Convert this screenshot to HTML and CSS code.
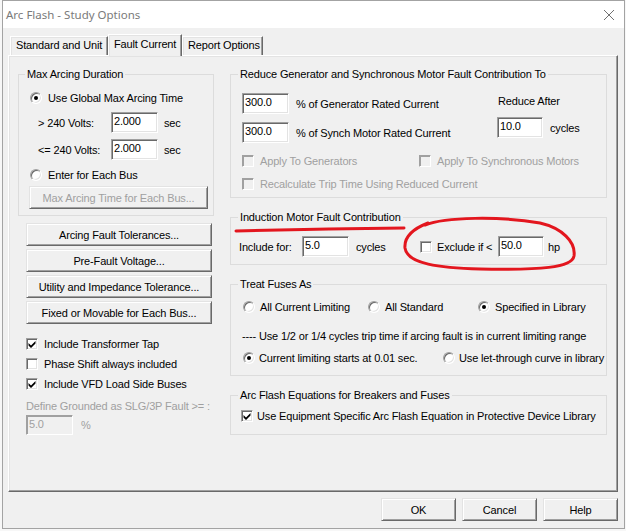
FILE: index.html
```html
<!DOCTYPE html>
<html>
<head>
<meta charset="utf-8">
<link rel="stylesheet" href="styles.css">
</head>
<body>
<div class="window">
  <div class="titlebar">
    <span class="title">Arc Flash - Study Options</span>
    <svg class="close" viewBox="0 0 10 10"><path d="M0 0L10 10M10 0L0 10" stroke="#707070" stroke-width="1" fill="none"/></svg>
  </div>
  <div class="tabs">
    <div class="tab t1">Standard and Unit</div>
    <div class="tab t2 active">Fault Current</div>
    <div class="tab t3">Report Options</div>
  </div>
  <div class="panel">
    <div class="col col-l">
      <fieldset class="group">
        <legend>Max Arcing Duration</legend>
        <div class="mad">
          <div class="row"><span class="radio on"></span><span>Use Global Max Arcing Time</span></div>
          <div class="vrow"><span class="vlabel">&gt; 240 Volts:</span><span class="field w47">2.000</span><span class="unit">sec</span></div>
          <div class="vrow"><span class="vlabel">&lt;= 240 Volts:</span><span class="field w47">2.000</span><span class="unit">sec</span></div>
          <div class="row opt2"><span class="radio"></span><span>Enter for Each Bus</span></div>
          <div class="btn dis madbtn">Max Arcing Time for Each Bus...</div>
        </div>
      </fieldset>
      <div class="btn lbtn first">Arcing Fault Tolerances...</div>
      <div class="btn lbtn">Pre-Fault Voltage...</div>
      <div class="btn lbtn">Utility and Impedance Tolerance...</div>
      <div class="btn lbtn">Fixed or Movable for Each Bus...</div>
      <div class="checks">
        <div class="crow"><span class="cb"><svg viewBox="0 0 10 10"><polygon points="1.5,4 4,6.5 8.5,2 8.5,4.5 4,9 1.5,6.5" fill="#000"/></svg></span><span>Include Transformer Tap</span></div>
        <div class="crow"><span class="cb"></span><span>Phase Shift always included</span></div>
        <div class="crow"><span class="cb"><svg viewBox="0 0 10 10"><polygon points="1.5,4 4,6.5 8.5,2 8.5,4.5 4,9 1.5,6.5" fill="#000"/></svg></span><span>Include VFD Load Side Buses</span></div>
      </div>
      <div class="def">Define Grounded as SLG/3P Fault &gt;= :</div>
      <div class="defrow"><span class="field dis w47 h20">5.0</span><span class="pct">%</span></div>
    </div>

    <div class="col col-r">
      <fieldset class="group">
        <legend>Reduce Generator and Synchronous Motor Fault Contribution To</legend>
        <div class="g1">
          <div class="top">
            <div class="lb">
              <div class="frow f1"><span class="field w47">300.0</span><span class="flabel">% of Generator Rated Current</span></div>
              <div class="frow f2"><span class="field w47">300.0</span><span class="flabel">% of Synch Motor Rated Current</span></div>
            </div>
            <div class="rb">
              <div class="ralabel">Reduce After</div>
              <div class="frow f3"><span class="field w46">10.0</span><span class="cyc">cycles</span></div>
            </div>
          </div>
          <div class="crow2 dtext">
            <div class="cell"><span class="cb dis"></span><span>Apply To Generators</span></div>
            <div class="cell"><span class="cb dis"></span><span>Apply To Synchronous Motors</span></div>
          </div>
          <div class="crow2 recalc dtext">
            <div class="cell"><span class="cb dis"></span><span>Recalculate Trip Time Using Reduced Current</span></div>
          </div>
        </div>
      </fieldset>

      <fieldset class="group gsp">
        <legend>Induction Motor Fault Contribution</legend>
        <div class="g2">
          <div class="irow">
            <span class="ilabel">Include for:</span>
            <span class="field w47">5.0</span>
            <span class="icyc">cycles</span>
            <span class="cb mr5"></span>
            <span class="iex">Exclude if &lt;</span>
            <span class="field w46">50.0</span>
            <span class="hp">hp</span>
          </div>
        </div>
      </fieldset>

      <fieldset class="group gsp">
        <legend>Treat Fuses As</legend>
        <div class="g3">
          <div class="frow3">
            <div class="cell"><span class="radio mr5"></span><span>All Current Limiting</span></div>
            <div class="cell"><span class="radio mr5"></span><span>All Standard</span></div>
            <div class="cell"><span class="radio on mr5"></span><span>Specified in Library</span></div>
          </div>
          <div class="note">---- Use 1/2 or 1/4 cycles trip time if arcing fault is in current limiting range</div>
          <div class="frow4">
            <div class="cell"><span class="radio on mr4"></span><span>Current limiting starts at 0.01 sec.</span></div>
            <div class="cell"><span class="radio mr4"></span><span>Use let-through curve in library</span></div>
          </div>
        </div>
      </fieldset>

      <fieldset class="group gsp">
        <legend>Arc Flash Equations for Breakers and Fuses</legend>
        <div class="g4">
          <div class="row"><span class="cb mr4"><svg viewBox="0 0 10 10"><polygon points="1.5,4 4,6.5 8.5,2 8.5,4.5 4,9 1.5,6.5" fill="#000"/></svg></span><span>Use Equipment Specific Arc Flash Equation in Protective Device Library</span></div>
        </div>
      </fieldset>
    </div>
  </div>
  <div class="footer">
    <div class="btn fbtn">OK</div>
    <div class="btn fbtn">Cancel</div>
    <div class="btn fbtn">Help</div>
  </div>
</div>
<svg class="annot" width="626" height="531" viewBox="0 0 626 531">
  <path d="M236 231 Q320 229 404 228" stroke="#e3161e" stroke-width="3" fill="none" stroke-linecap="round"/>
  <path d="M425 225 C445 217 500 216 540 223 C562 228 576 242 574 256 C572 268 540 270 480 269 C440 268 407 264 405 248 C404 238 410 230 428 223" stroke="#e3161e" stroke-width="3" fill="none" stroke-linecap="round"/>
</svg>
</body>
</html>
```
FILE: styles.css
```css
* { box-sizing: border-box; }
body {
  margin: 0;
  width: 626px;
  height: 531px;
  overflow: hidden;
  position: relative;
  background: #f7f7f7;
  font-family: "Liberation Sans", Arial, sans-serif;
  font-size: 11px;
  letter-spacing: -0.15px;
  color: #000;
}
.window {
  margin-left: 2px;
  width: 623px;
  height: 529px;
  border: 1px solid #a3a3a3;
  background: #f0f0f0;
  display: flex;
  flex-direction: column;
}
.titlebar {
  height: 27px;
  flex: none;
  background: #fff;
  display: flex;
  align-items: center;
  justify-content: space-between;
  padding: 0 10px 0 3px;
}
.title {
  font-family: "Noto Sans", "Open Sans", sans-serif;
  font-size: 11.5px;
  letter-spacing: 0;
  color: #7a7a7a;
}
.close { width: 10px; height: 10px; display: block; }

.tabs {
  display: flex;
  align-items: flex-end;
  height: 21px;
  margin: 6px 0 0 7px;
  flex: none;
  position: relative;
  z-index: 1;
}
.tab {
  height: 19px;
  line-height: 17px;
  padding-left: 5px;
  border: 1px solid;
  border-bottom: none;
  border-color: #fff #696969 transparent #fff;
  box-shadow: inset -1px 0 0 #a0a0a0, inset 1px 1px 0 #e3e3e3;
  white-space: nowrap;
  background: #f0f0f0;
}
.t1 { width: 98px; }
.t2 { width: 74px; }
.t3 { width: 81px; }
.tab.active { height: 22px; margin-bottom: -1px; line-height: 18px; }

.panel {
  height: 437px;
  flex: none;
  margin: 0 6px 0 5px;
  border: 1px solid;
  border-color: #fff #696969 #696969 #fff;
  box-shadow: inset -1px -1px 0 #a0a0a0, inset 1px 1px 0 #e3e3e3;
  padding: 12px 10px 0 9px;
  display: grid;
  grid-template-columns: 196px 377px;
  column-gap: 16px;
  align-items: start;
}
.col { display: flex; flex-direction: column; }

fieldset.group {
  margin: 0;
  padding: 0;
  border: 1px solid #dcdcdc;
  min-width: 0;
}
legend {
  margin-left: 6px;
  padding: 0 2px;
  line-height: 13px;
  height: 13px;
  white-space: nowrap;
}
.col-r legend { margin-left: 7px; }
fieldset.gsp { margin-top: 13px; }

.row { display: flex; align-items: center; height: 16px; white-space: nowrap; }
.cell { display: flex; align-items: center; height: 16px; white-space: nowrap; }

.btn {
  height: 23px;
  border: 1px solid;
  border-color: #e3e3e3 #696969 #696969 #e3e3e3;
  box-shadow: inset 1px 1px 0 #fff, inset -1px -1px 0 #a0a0a0;
  background: #f0f0f0;
  display: flex;
  align-items: center;
  justify-content: center;
  white-space: nowrap;
  flex: none;
}
.btn.dis { color: #a0a0a0; }

.field {
  height: 21px;
  border: 1px solid;
  border-color: #a0a0a0 #fff #fff #a0a0a0;
  box-shadow: inset 1px 1px 0 #696969, inset -1px -1px 0 #e3e3e3;
  background: #fff;
  padding: 1px 2px 0 2px;
  line-height: 14px;
  flex: none;
  white-space: nowrap;
}
.field.dis { background: #f0f0f0; color: #a0a0a0; box-shadow: inset 1px 1px 0 #a0a0a0; }
.w47 { width: 47px; }
.w46 { width: 46px; }
.h20 { height: 20px; }

.radio {
  width: 12px;
  height: 12px;
  border-radius: 50%;
  flex: none;
  background: #fff;
  border: 1px solid;
  border-color: #a0a0a0 #fff #fff #a0a0a0;
  box-shadow: inset 1px 1px 0 #696969, inset -1px -1px 0 #e3e3e3;
  position: relative;
  margin-right: 6px;
}
.radio.on::after {
  content: "";
  position: absolute;
  left: 3px;
  top: 3px;
  width: 4px;
  height: 4px;
  border-radius: 50%;
  background: #000;
}
.cb {
  width: 12px;
  height: 12px;
  flex: none;
  background: #fff;
  border: 1px solid;
  border-color: #a0a0a0 #fff #fff #a0a0a0;
  box-shadow: inset 1px 1px 0 #696969, inset -1px -1px 0 #e3e3e3;
  display: flex;
  align-items: center;
  justify-content: center;
  margin-right: 6px;
}
.cb svg { width: 10px; height: 10px; display: block; }
.cb.dis { background: #f0f0f0; box-shadow: inset 1px 1px 0 #a0a0a0; }
.cb.mr5 { margin-right: 5px; }
.cb.mr4, .radio.mr4 { margin-right: 4px; }
.radio.mr5 { margin-right: 5px; }

/* left column */
.mad { padding: 9px 0 6px 11px; }
.vrow { display: flex; align-items: center; height: 21px; margin: 6px 0 0 8px; white-space: nowrap; }
.vlabel { width: 73px; }
.unit { margin-left: 6px; }
.opt2 { margin-top: 7px; }
.madbtn { margin: 3px 0 0 -1px; width: 179px; }
.lbtn { margin: 3px 0 0 8px; width: 186px; }
.lbtn.first { margin-top: 7px; }
.checks { margin-top: 10px; }
.crow { display: flex; align-items: center; height: 20px; padding-left: 8px; white-space: nowrap; }
.def { margin: 4px 0 0 8px; height: 16px; line-height: 16px; color: #a0a0a0; white-space: nowrap; }
.defrow { margin: 1px 0 0 8px; display: flex; align-items: center; }
.pct { margin-left: 8px; color: #a0a0a0; }

/* right column */
.g1 { padding: 3px 0 5px 11px; }
.top { display: grid; grid-template-columns: 255px auto; }
.frow { display: flex; align-items: center; height: 21px; white-space: nowrap; }
.f1 { margin-top: 9px; }
.f2 { margin-top: 8px; }
.f3 { margin-top: 8px; }
.flabel { margin-left: 7px; }
.ralabel { margin-top: 9px; height: 16px; line-height: 16px; padding-left: 1px; white-space: nowrap; }
.cyc { margin-left: 7px; }
.crow2 { display: grid; grid-template-columns: 177px auto; margin-top: 10px; }
.crow2.recalc { margin-top: 7px; }
.dtext { color: #a0a0a0; }

.g2 { padding: 12px 0 7px 8px; }
.irow { display: flex; align-items: center; height: 21px; white-space: nowrap; }
.ilabel { width: 63px; }
.icyc { width: 71px; padding-left: 7px; }
.iex { width: 61px; }
.hp { margin-left: 4px; }

.g3 { padding: 8px 0 9px 12px; }
.frow3 { display: grid; grid-template-columns: 125px 110px auto; }
.note { margin: 13px 0 0 -1px; height: 16px; line-height: 16px; white-space: nowrap; }
.frow4 { display: grid; grid-template-columns: 200px auto; margin-top: 6px; }

.g4 { padding: 6px 0 10px 10px; }

.footer {
  display: flex;
  justify-content: flex-end;
  gap: 6px;
  margin-top: 6px;
  padding-right: 6px;
  flex: none;
}
.fbtn { width: 75px; }

.annot { position: absolute; left: 0; top: 0; pointer-events: none; }
```
